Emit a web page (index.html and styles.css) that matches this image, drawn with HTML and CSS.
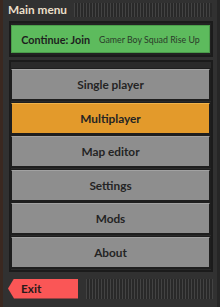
FILE: index.html
```html
<!DOCTYPE html>
<html>
<head>
<meta charset="utf-8">
<link rel="stylesheet" href="styles.css">
</head>
<body>
<div class="window">
  <div class="titlebar">
    <span class="title">Main menu</span>
    <div class="handle"></div>
  </div>
  <div class="continue-wrap">
    <div class="continue"><b>Continue: Join</b><span class="game">Gamer Boy Squad Rise Up</span></div>
  </div>
  <div class="panel">
    <div class="btn">Single player</div>
    <div class="btn active">Multiplayer</div>
    <div class="btn">Map editor</div>
    <div class="btn">Settings</div>
    <div class="btn">Mods</div>
    <div class="btn">About</div>
  </div>
  <div class="footer">
    <div class="exit">Exit</div>
    <div class="handle foot"></div>
  </div>
</div>
</body>
</html>
```
FILE: styles.css
```css
html, body {
  margin: 0;
  padding: 0;
}
body {
  width: 220px;
  height: 307px;
  background: linear-gradient(to right, #3a2820 0, #3a2820 3px, #262626 3px);
  font-family: "Lato", "Noto Sans", sans-serif;
  overflow: hidden;
}
.window {
  margin-left: 3px;
  width: 214px;
  height: 307px;
  background: #313131;
  box-sizing: border-box;
  display: flex;
  flex-direction: column;
}
.titlebar {
  display: flex;
  align-items: center;
  height: 20px;
  padding: 0 5px 0 5px;
  gap: 7px;
}
.title {
  color: #eadfc9;
  font-weight: bold;
  font-size: 11.8px;
  line-height: 20px;
  white-space: nowrap;
}
.handle {
  flex: 1;
  align-self: stretch;
  margin: 3px 0;
  background: repeating-linear-gradient(to right, #434343 0, #434343 1px, #292929 1px, #292929 3px);
}
.continue-wrap {
  margin: 1px 4px 0 6px;
  border: 2px solid #1b1b1b;
  padding: 2px 1px 2px 0;
  background: #222;
}
.continue {
  height: 28px;
  background: #5dbb5d;
  border: 1px solid #4a9c4a;
  box-sizing: border-box;
  display: flex;
  align-items: center;
  justify-content: center;
  gap: 9px;
  color: #1d1d1d;
  font-size: 10.8px;
  white-space: nowrap;
}
.continue b {
  font-weight: bold;
}
.continue .game {
  font-size: 8.8px;
  color: #2a3a2a;
}
.panel {
  margin: 3px 4px 0 6px;
  border: 2px solid #1b1b1b;
  background: #2a2a2a;
  padding: 7px 1px 2px 0;
  display: flex;
  flex-direction: column;
  gap: 2.5px;
}
.btn {
  height: 31px;
  box-sizing: border-box;
  background: #8e8e8e;
  border: 1px solid #1e1e1e;
  border-top-color: #a2a2a2;
  outline: 1px solid #1e1e1e;
  display: flex;
  align-items: center;
  justify-content: center;
  color: #242424;
  font-weight: bold;
  font-size: 11.8px;
}
.btn.active {
  background: #e39a2b;
  border-top-color: #f0b34a;
}
.footer {
  display: flex;
  align-items: stretch;
  gap: 8px;
  margin-top: 7px;
  padding: 0 4px 0 5px;
  height: 20px;
}
.exit {
  width: 70px;
  height: 20px;
  background: #fa5656;
  clip-path: polygon(6px 0, 100% 0, 100% 100%, 6px 100%, 0 50%);
  color: #2a1a1a;
  font-weight: bold;
  font-size: 11.8px;
  line-height: 20px;
  padding-left: 13px;
  box-sizing: border-box;
}
.handle.foot {
  margin: 0;
}
```
